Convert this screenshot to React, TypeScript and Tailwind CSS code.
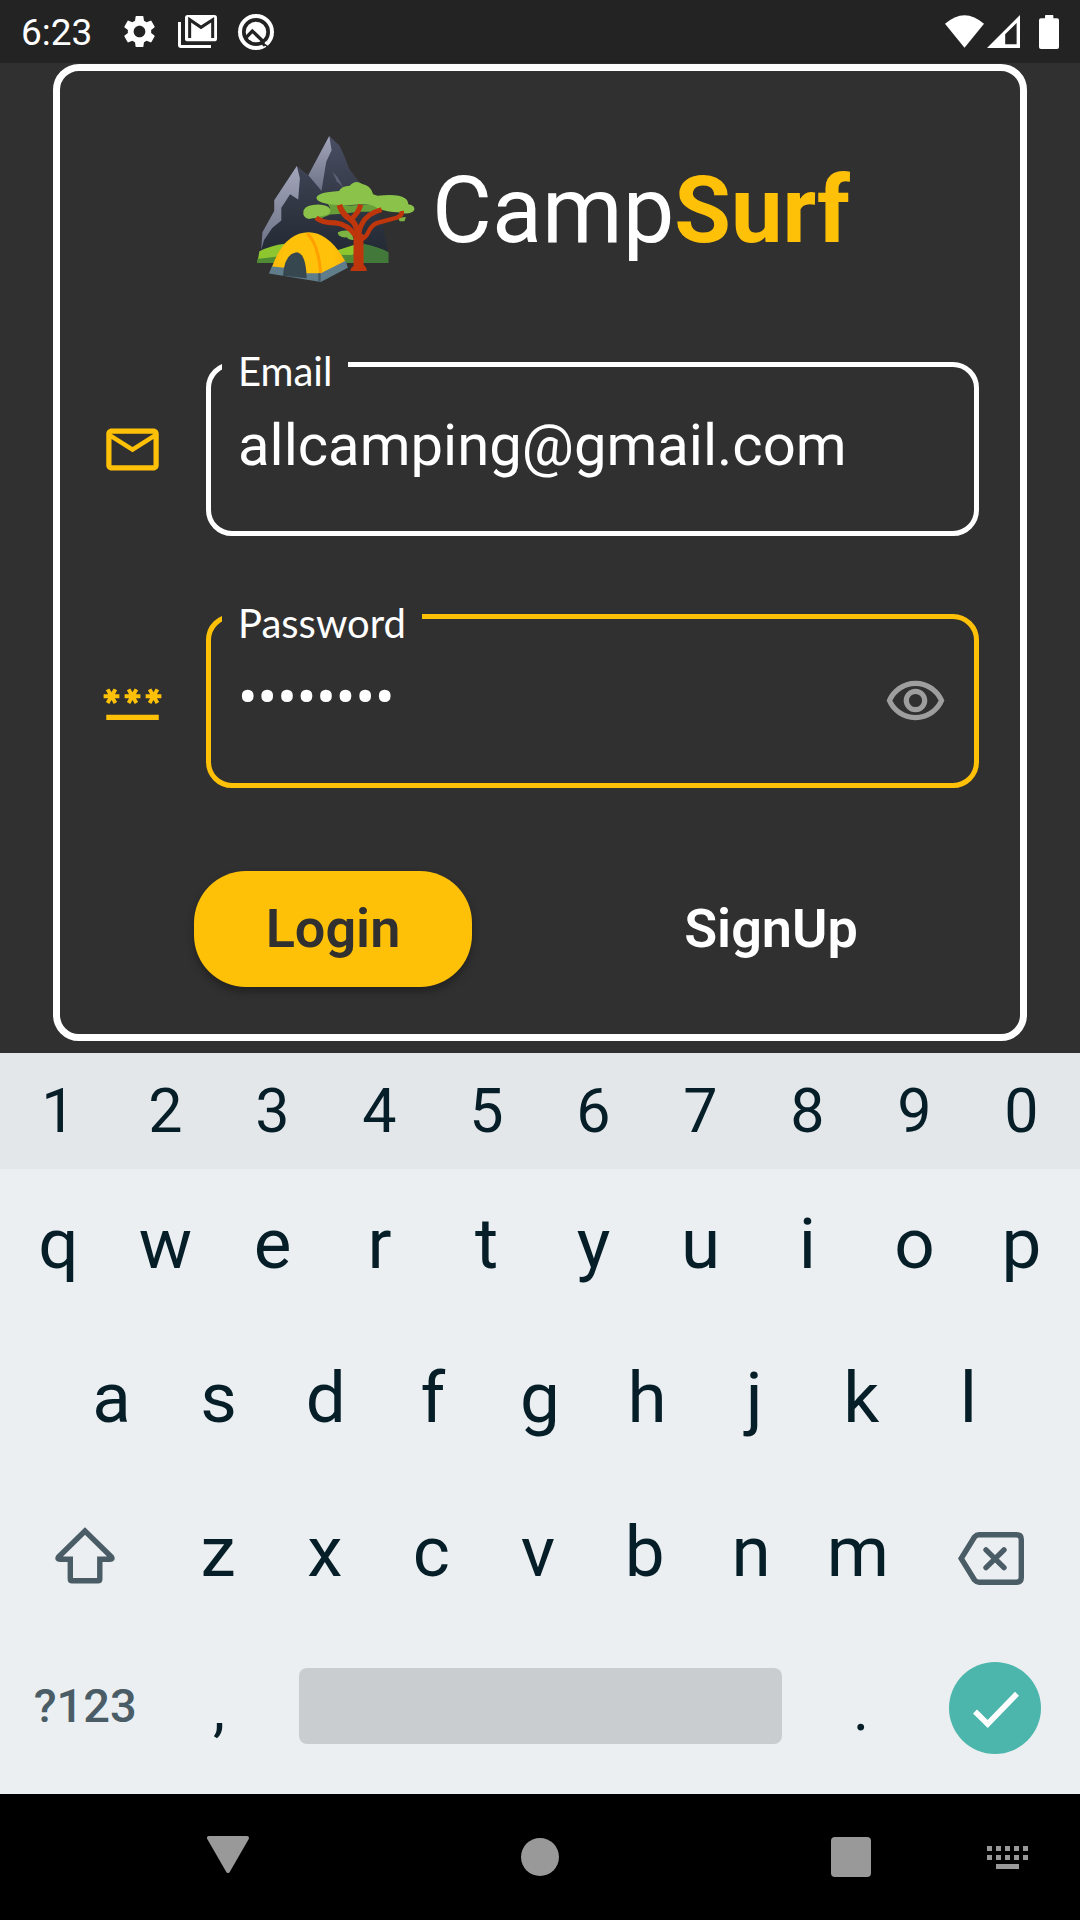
import { useState } from "react";
import type { ReactNode } from "react";
import { MdMailOutline, MdOutlineRemoveRedEye, MdPassword, MdSettings } from "react-icons/md";

const DIGITS = ["1", "2", "3", "4", "5", "6", "7", "8", "9", "0"];
const ROW_ONE = ["q", "w", "e", "r", "t", "y", "u", "i", "o", "p"];
const ROW_TWO = ["a", "s", "d", "f", "g", "h", "j", "k", "l"];
const ROW_THREE = ["z", "x", "c", "v", "b", "n", "m"];

function MailStackIcon() {
  return (
    <svg viewBox="0 0 117 99" className="h-[33px] w-[39px]" aria-hidden="true">
      <path d="M0 21V90Q0 99 9 99H99V90H9V21Z" fill="#fff" />
      <rect x="21" y="0" width="96" height="79" rx="8" fill="#fff" />
      <path d="M35 69V14L69 37L104 14V69" fill="none" stroke="#232323" strokeWidth="9" />
    </svg>
  );
}

function SearchBadgeIcon() {
  return (
    <svg viewBox="0 0 120 120" className="size-[40px]" aria-hidden="true">
      <circle cx="60" cy="60" r="48" fill="none" stroke="#fff" strokeWidth="12" />
      <circle cx="60" cy="60" r="31" fill="#fff" />
      <path d="M30 77L49 57L100 106" fill="none" stroke="#232323" strokeWidth="10" />
      <path d="M78 86L90 98" fill="none" stroke="#232323" strokeWidth="18" />
      <path d="M88 90L98 98" fill="none" stroke="#fff" strokeWidth="9" />
    </svg>
  );
}

function StatusBar() {
  return (
    <header className="flex h-[63px] items-center bg-[#232323] pl-[21px] pr-[21px]">
      <span className="pt-[2px] text-[37px] leading-[40px] text-white">6:23</span>
      <div className="ml-[28px] flex items-center gap-[19px] text-white">
        <MdSettings className="size-[39px]" aria-hidden="true" />
        <MailStackIcon />
        <SearchBadgeIcon />
      </div>
      <div className="ml-auto flex items-center">
        <svg viewBox="0 0 117 98" className="h-[33px] w-[39px]" aria-hidden="true">
          <path d="M0 26Q58.500 -26 117 26L58.500 98Z" fill="#fff" />
        </svg>
        <svg viewBox="0 0 98 98" className="ml-[3px] size-[33px]" aria-hidden="true">
          <path d="M98 0V98H0ZM88 24L54 57V87H88Z" fill="#fff" fillRule="evenodd" />
        </svg>
        <svg viewBox="0 0 60 102" className="ml-[19px] h-[34px] w-[20px]" aria-hidden="true">
          <rect x="18" y="0" width="25" height="20" rx="2" fill="#fff" />
          <rect x="0" y="10" width="60" height="92" rx="6" fill="#fff" />
        </svg>
      </div>
    </header>
  );
}

function CampLogo() {
  return (
    <svg viewBox="80 65 474 465" className="h-[157px] w-[160px] shrink-0" aria-hidden="true">
      <defs>
        <linearGradient id="rock" x1="0" y1="0" x2="0" y2="1">
          <stop offset="0" stopColor="#4a4e63" />
          <stop offset="0.6" stopColor="#2f3541" />
          <stop offset="1" stopColor="#202833" />
        </linearGradient>
        <linearGradient id="snow" x1="0" y1="0" x2="0" y2="1">
          <stop offset="0" stopColor="#a3a6bb" />
          <stop offset="1" stopColor="#6d7186" />
        </linearGradient>
        <linearGradient id="canvas" x1="0" y1="0" x2="1" y2="0">
          <stop offset="0" stopColor="#ffb70a" />
          <stop offset="0.15" stopColor="#ffc10a" />
          <stop offset="0.85" stopColor="#ffc10a" />
          <stop offset="1" stopColor="#ffb20a" />
        </linearGradient>
      </defs>
      {/* mountains */}
      <path
        d="M297 80L327 108L342 140L356 177L385 215L430 270L456 345L472 430V450H88L99 365L134 302V270L201 169L235 196Z"
        fill="url(#rock)"
      />
      <path d="M297 80L304 122L288 156L274 242L235 196Z" fill="url(#snow)" />
      <path
        d="M201 169L210 205L205 268L181 252L162 282L155 292V330L128 352L104 388L95 418L99 365L134 302V270Z"
        fill="url(#snow)"
      />
      <path d="M306 184L319 214L340 233L321 201Z" fill="#5d6175" />
      {/* grass */}
      <path d="M90 421Q125 404 165 399L300 425L372 402V456H84Z" fill="#8dc62f" />
      <path d="M84 444L150 436L210 430L365 432L400 400Q440 408 472 424V456H84Z" fill="#4f8a35" />
      <path d="M398 401Q440 408 472 424V456H398Z" fill="#42783a" />
      {/* tree crown */}
      <path
        d="M290 276Q330 284 360 286L420 282L452 294L440 304H385L340 310L300 312L270 325L232 322L300 294Z"
        fill="#689f38"
      />
      <path
        d="M259 263Q262 247 326 243Q332 228 358 227Q374 208 395 222Q420 226 427 252L440 257Q500 250 521 264Q530 268 531 282Q552 286 549 299Q542 310 521 309L500 306Q470 306 440 294Q420 278 385 283L345 285Q300 285 275 277Q260 272 259 263Z"
        fill="#8bc34a"
      />
      <path
        d="M221 300Q228 284 264 283Q296 284 300 298Q302 312 280 316L237 326Q216 322 221 300Z"
        fill="#8bc34a"
      />
      <path d="M322 366Q334 357 362 361L370 388Q355 389 349 380Q324 382 322 366Z" fill="#7cb342" />
      <path d="M500 322L524 320L520 332L506 332Z" fill="#7cb342" />
      {/* trunk and branches */}
      <path d="M369 370H398L399 462Q408 468 408 480H359Q361 469 369 464Z" fill="#bf360c" />
      <g fill="none" stroke="#bf360c" strokeWidth="13" strokeLinecap="butt">
        <path d="M258 322Q278 338 315 337Q352 342 374 374" strokeWidth="15" />
        <path d="M327 284Q336 314 358 325Q380 340 384 378" strokeWidth="17" />
        <path d="M390 283Q384 308 360 328" strokeWidth="15" />
        <path d="M452 298Q408 310 394 340Q384 358 385 380" strokeWidth="15" />
        <path d="M512 302Q514 316 496 322L440 337Q424 342 414 362Q408 378 390 388" />
      </g>
      {/* tent */}
      <path d="M128 464L346 450L352 470L272 512L118 487Z" fill="#607d8b" />
      <path d="M128 466Q164 366 236 365Q296 366 344 450L272 486L228 486Q200 470 166 470Z" fill="url(#canvas)" />
      <path d="M232 369Q264 398 272 486" fill="none" stroke="#ffa000" strokeWidth="9" />
      <path d="M160 494Q164 427 202 424Q228 428 230 501Z" fill="#37474f" />
      <path d="M268 486V511" stroke="#455a64" strokeWidth="7" />
    </svg>
  );
}

function Field({
  id,
  label,
  icon,
  active,
  children,
}: {
  id: string;
  label: string;
  icon: ReactNode;
  active?: boolean;
  children: ReactNode;
}) {
  return (
    <div className="flex items-center gap-[42px]">
      <div className="shrink-0 pt-[17px] text-[#ffc107]">{icon}</div>
      <fieldset
        className={
          active
            ? "min-w-0 flex-1 rounded-[26px] border-[5px] border-[#ffc107] px-[11px] pb-[46px]"
            : "min-w-0 flex-1 rounded-[26px] border-[5px] border-white px-[11px] pb-[46px]"
        }
      >
        <legend className="px-4 pt-[14px] font-['Lato',sans-serif] text-[40px] leading-[24px] text-white">
          <label htmlFor={id}>{label}</label>
        </legend>
        <div className="flex items-center px-4 pt-[22px]">{children}</div>
      </fieldset>
    </div>
  );
}

function LoginCard() {
  const [email, setEmail] = useState("allcamping@gmail.com");
  const [password, setPassword] = useState("campsurf");
  const [visible, setVisible] = useState(false);

  return (
    <form
      onSubmit={(event) => event.preventDefault()}
      className="rounded-[26px] border-[7px] border-white px-[41px] pb-[47px] pt-[60px]"
    >
      <h1 className="flex items-center justify-center gap-4 pl-[26px] text-[92px] leading-[108px] text-white">
        <CampLogo />
        <span className="pt-[2px]">
          Camp<span className="font-bold text-[#ffc107]">Surf</span>
        </span>
      </h1>

      <div className="mt-[57px] flex flex-col gap-[61px]">
        <Field id="email" label="Email" icon={<MdMailOutline className="size-[63px]" aria-hidden="true" />}>
          <input
            id="email"
            type="email"
            value={email}
            onChange={(event) => setEmail(event.target.value)}
            className="h-[80px] w-full min-w-0 bg-transparent text-[58px] leading-[80px] text-white outline-none"
          />
        </Field>
        <Field
          id="password"
          label="Password"
          active
          icon={<MdPassword className="size-[63px]" aria-hidden="true" />}
        >
          <input
            id="password"
            type={visible ? "text" : "password"}
            value={password}
            onChange={(event) => setPassword(event.target.value)}
            className="h-[80px] min-w-0 flex-1 bg-transparent text-[58px] leading-[80px] text-white outline-none"
          />
          <button
            type="button"
            aria-label="Show password"
            onClick={() => setVisible(!visible)}
            className="pt-[6px] text-[#9e9e9e]"
          >
            <MdOutlineRemoveRedEye className="size-[63px]" />
          </button>
        </Field>
      </div>

      <div className="mt-[83px] flex justify-between pl-[93px] pr-[69px] text-[54px] font-semibold leading-[60px]">
        <button
          type="submit"
          className="w-[278px] rounded-[52px] bg-[#ffc107] py-7 text-[#303030] shadow-[0_5px_8px_rgba(0,0,0,0.3)]"
        >
          Login
        </button>
        <button type="button" className="w-[278px] rounded-[52px] py-7 text-white">
          SignUp
        </button>
      </div>
    </form>
  );
}

function Key({ label }: { label: string }) {
  return (
    <button type="button" className="h-[116px] flex-[2] basis-0">
      {label}
    </button>
  );
}

function Keyboard() {
  return (
    <section aria-label="Keyboard" className="bg-[#ebeff2] text-[#051e28]">
      <div className="flex bg-[#e3e7ea] px-[5px] text-[61px] leading-[64px]">
        {DIGITS.map((key) => (
          <Key key={key} label={key} />
        ))}
      </div>
      <div className="flex flex-col gap-[38px] pb-[31px] pt-4 text-[71px] leading-none">
        <div className="flex px-[5px]">
          {ROW_ONE.map((key) => (
            <Key key={key} label={key} />
          ))}
        </div>
        <div className="flex px-[58px]">
          {ROW_TWO.map((key) => (
            <Key key={key} label={key} />
          ))}
        </div>
        <div className="flex px-[5px]">
          <button type="button" aria-label="Shift" className="flex flex-[3] basis-0 items-center justify-center pt-2">
            <svg viewBox="0 0 60 57" className="h-[57px] w-[60px]" fill="none" stroke="#4a5c65" strokeWidth="5.4">
              <path d="M30 4L3.500 30Q2 32.300 5 32.300H15.300V52Q15.300 53.800 17.100 53.800H43Q44.800 53.800 44.800 52V32.300H55Q58 32.300 56.500 30Z" />
            </svg>
          </button>
          {ROW_THREE.map((key) => (
            <Key key={key} label={key} />
          ))}
          <button
            type="button"
            aria-label="Backspace"
            className="flex flex-[3] basis-0 items-center justify-center pr-1 pt-[14px]"
          >
            <svg viewBox="0 0 66 53" className="h-[53px] w-[66px]" fill="none" stroke="#4a5c65" strokeWidth="5.4">
              <path d="M3.200 26.500L16.500 5Q18.500 2.800 21 2.800H58.500Q63.300 2.800 63.300 7.500V45.500Q63.300 50.200 58.500 50.200H21Q18.500 50.200 16.500 48Z" />
              <path d="M28 17.800L46 35.600M46 17.800L28 35.600" strokeLinecap="round" />
            </svg>
          </button>
        </div>
        <div className="flex items-center px-[5px] text-[61px]">
          <button type="button" className="h-[116px] flex-[3] basis-0 text-[47px] font-medium text-[#4a5c65]">
            ?123
          </button>
          <button type="button" className="h-[116px] flex-[2] basis-0 pt-2">
            ,
          </button>
          <div className="flex-[10] basis-0">
            <div className="flex px-[26px] pt-[2px]">
              <button type="button" aria-label="Space" className="h-[76px] flex-1 rounded-lg bg-[#c9cdd0]" />
            </div>
          </div>
          <button type="button" className="h-[116px] flex-[2] basis-0 pt-2">
            .
          </button>
          <div className="flex flex-[3] basis-0 justify-center pt-[6px]">
            <button type="button" aria-label="Done" className="size-[92px] rounded-full bg-[#4db6ac]">
              <svg viewBox="0 0 92 92" fill="none" stroke="#fff" strokeWidth="5.6">
                <path d="M26 49.500L38.700 62L68 31.700" />
              </svg>
            </button>
          </div>
        </div>
      </div>
    </section>
  );
}

function NavBar() {
  return (
    <nav className="flex h-[126px] items-center justify-between bg-black pl-[155px]">
      <button type="button" aria-label="Back" className="flex h-full w-[146px] items-center justify-center">
        <svg viewBox="0 0 42 44" className="h-[44px] w-[42px]" fill="#999" stroke="#999" strokeWidth="4" strokeLinejoin="round">
          <path d="M2 3H40L21 36Z" />
        </svg>
      </button>
      <button type="button" aria-label="Home" className="flex h-full w-[146px] items-center justify-center">
        <span className="size-[38px] rounded-full bg-[#999]" />
      </button>
      <div className="flex h-full gap-[10px]">
        <button type="button" aria-label="Recent apps" className="flex w-[146px] items-center justify-center">
          <span className="size-[40px] rounded bg-[#999]" />
        </button>
        <button type="button" aria-label="Switch keyboard" className="flex w-[146px] items-center justify-center">
          <svg viewBox="0 0 41 23" className="h-[23px] w-[41px]" fill="#999">
            {[0, 9, 18, 27, 36].map((x) => (
              <g key={x}>
                <rect x={x} y="0" width="5" height="5" />
                <rect x={x} y="9" width="5" height="5" />
              </g>
            ))}
            <rect x="9" y="18" width="23" height="5" />
          </svg>
        </button>
      </div>
    </nav>
  );
}

export default function App() {
  return (
    <div className="min-h-screen bg-[#303030] font-['Roboto',sans-serif]">
      <StatusBar />
      <main className="px-[53px] pb-3 pt-px">
        <LoginCard />
      </main>
      <Keyboard />
      <NavBar />
    </div>
  );
}
